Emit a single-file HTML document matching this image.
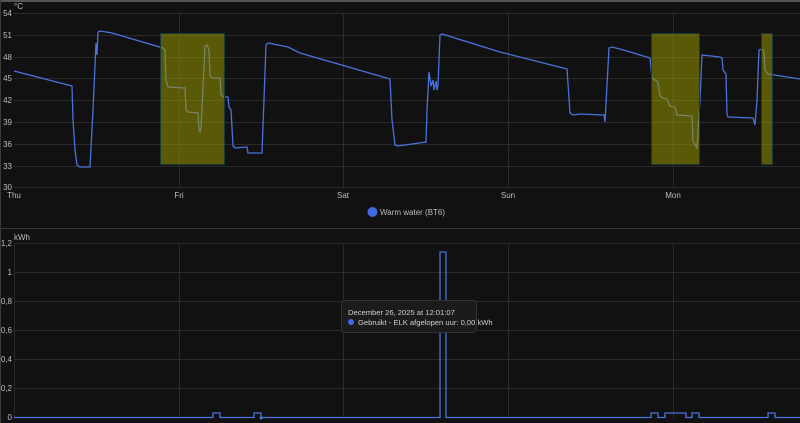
<!DOCTYPE html>
<html><head><meta charset="utf-8"><style>
html,body{margin:0;padding:0;background:#111;width:800px;height:423px;overflow:hidden;font-family:"Liberation Sans",sans-serif}
svg text{font-family:"Liberation Sans",sans-serif;fill:#bdbdbd;font-size:8px}
.tt{position:absolute;left:341px;top:300px;width:136px;height:33px;background:#1b1b1b;border:1px solid #333;border-radius:4px;box-sizing:border-box;color:#d0d0d0;font-size:7.6px;white-space:nowrap}
</style></head><body>
<svg width="800" height="423" style="position:absolute;left:0;top:0">
<rect x="0" y="0" width="800" height="2" fill="#555"/>
<rect x="0" y="0" width="1" height="423" fill="#3a3a3a"/>
<g stroke="#2a2a2a" stroke-width="1">
<line x1="14" x2="800" y1="13.5" y2="13.5"/><line x1="14" x2="800" y1="35.5" y2="35.5"/><line x1="14" x2="800" y1="57.5" y2="57.5"/><line x1="14" x2="800" y1="78.5" y2="78.5"/><line x1="14" x2="800" y1="100.5" y2="100.5"/><line x1="14" x2="800" y1="122.5" y2="122.5"/><line x1="14" x2="800" y1="144.5" y2="144.5"/><line x1="14" x2="800" y1="166.5" y2="166.5"/><line x1="14" x2="800" y1="187.5" y2="187.5"/>
<line x1="179.5" x2="179.5" y1="13" y2="188"/><line x1="343.5" x2="343.5" y1="13" y2="188"/><line x1="508.5" x2="508.5" y1="13" y2="188"/><line x1="673.5" x2="673.5" y1="13" y2="188"/>
<line x1="0" x2="800" y1="228.5" y2="228.5" stroke="#333"/>
<line x1="14" x2="800" y1="243.5" y2="243.5"/><line x1="14" x2="800" y1="272.5" y2="272.5"/><line x1="14" x2="800" y1="301.5" y2="301.5"/><line x1="14" x2="800" y1="330.5" y2="330.5"/><line x1="14" x2="800" y1="359.5" y2="359.5"/><line x1="14" x2="800" y1="388.5" y2="388.5"/>
<line x1="14.5" x2="14.5" y1="243" y2="418"/><line x1="179.5" x2="179.5" y1="243" y2="418"/><line x1="343.5" x2="343.5" y1="243" y2="418"/><line x1="508.5" x2="508.5" y1="243" y2="418"/><line x1="673.5" x2="673.5" y1="243" y2="418"/>
</g>
<text x="14" y="9">°C</text>
<g text-anchor="end"><text x="12" y="16">54</text><text x="12" y="38">51</text><text x="12" y="60">48</text><text x="12" y="81">45</text><text x="12" y="103">42</text><text x="12" y="125">39</text><text x="12" y="147">36</text><text x="12" y="169">33</text><text x="12" y="190">30</text></g>
<g text-anchor="middle"><text x="14" y="198">Thu</text><text x="179" y="198">Fri</text><text x="343" y="198">Sat</text><text x="508" y="198">Sun</text><text x="673" y="198">Mon</text></g>
<circle cx="372.5" cy="212" r="5" fill="#4169e1"/>
<text x="380" y="215" fill="#ccc">Warm water (BT6)</text>
<polyline fill="none" stroke="#4a72dc" stroke-width="1.3" points="14,71 72,86 73,120 75,150 77,165 80,167 90,167 93,110 96,43 97,55 98,32 100,31 112,33 163,48 165,50 166,80 168,87 185,88 186,110 188,112 198,113 199,130 200,132 201,128 205,46 207,45 209,50 210,76 213,78 220,78 221,95 224,97 228,97 229,107 231,110 233,146 235,148 247,147 248,153 262,153 266,45 268,43 288,47 300,53 390,79 392,120 395,145 398,146 426,142 427,110 429,72 431,86 433,80 434,90 436,81 437,90 438,85 440,35 442,34 500,52 508,54 567,69 570,113 573,115 580,114 604,115 605,122 609,48 612,47 627,51 650,58 652,78 655,80 658,82 660,96 663,98 667,99 670,106 675,107 677,115 692,116 693,141 697,148 700,100 702,55 720,57 722,58 723,70 726,74 727,114 728,117 753,118 755,125 757,100 759,50 762,49 764,52 765,70 768,74 800,79"/>
<g fill="rgba(150,150,0,0.55)" stroke="#1a3a3a" stroke-width="1">
<rect x="160.5" y="33.5" width="64" height="131"/><rect x="651.5" y="33.5" width="48" height="131"/><rect x="761.5" y="33.5" width="11" height="131"/>
</g>
<text x="14" y="240">kWh</text>
<g text-anchor="end"><text x="12" y="246">1,2</text><text x="12" y="275">1</text><text x="12" y="304">0,8</text><text x="12" y="333">0,6</text><text x="12" y="362">0,4</text><text x="12" y="391">0,2</text><text x="12" y="420">0</text></g>
<polyline fill="none" stroke="#4a72dc" stroke-width="1.3" points="14,417.5 213,417.5 213,413 220,413 220,417.5 254,417.5 254,413 261,413 261,417.5 440,417.5 440,252 446,252 446,417.5 651,417.5 651,413 658,413 658,417.5 665,417.5 665,413 686,413 686,417.5 692,417.5 692,413 699,413 699,417.5 768,417.5 768,413 775,413 775,417.5 800,417.5"/>
<circle cx="261" cy="418" r="1.5" fill="#4a72dc"/>
</svg>
<div class="tt"><div style="position:absolute;left:6px;top:7px">December 26, 2025 at 12:01:07</div>
<div style="position:absolute;left:6px;top:18px;width:6px;height:6px;border-radius:50%;background:#4169e1"></div>
<div style="position:absolute;left:16px;top:17px">Gebruikt - ELK afgelopen uur: 0,00 kWh</div></div>
</body></html>
